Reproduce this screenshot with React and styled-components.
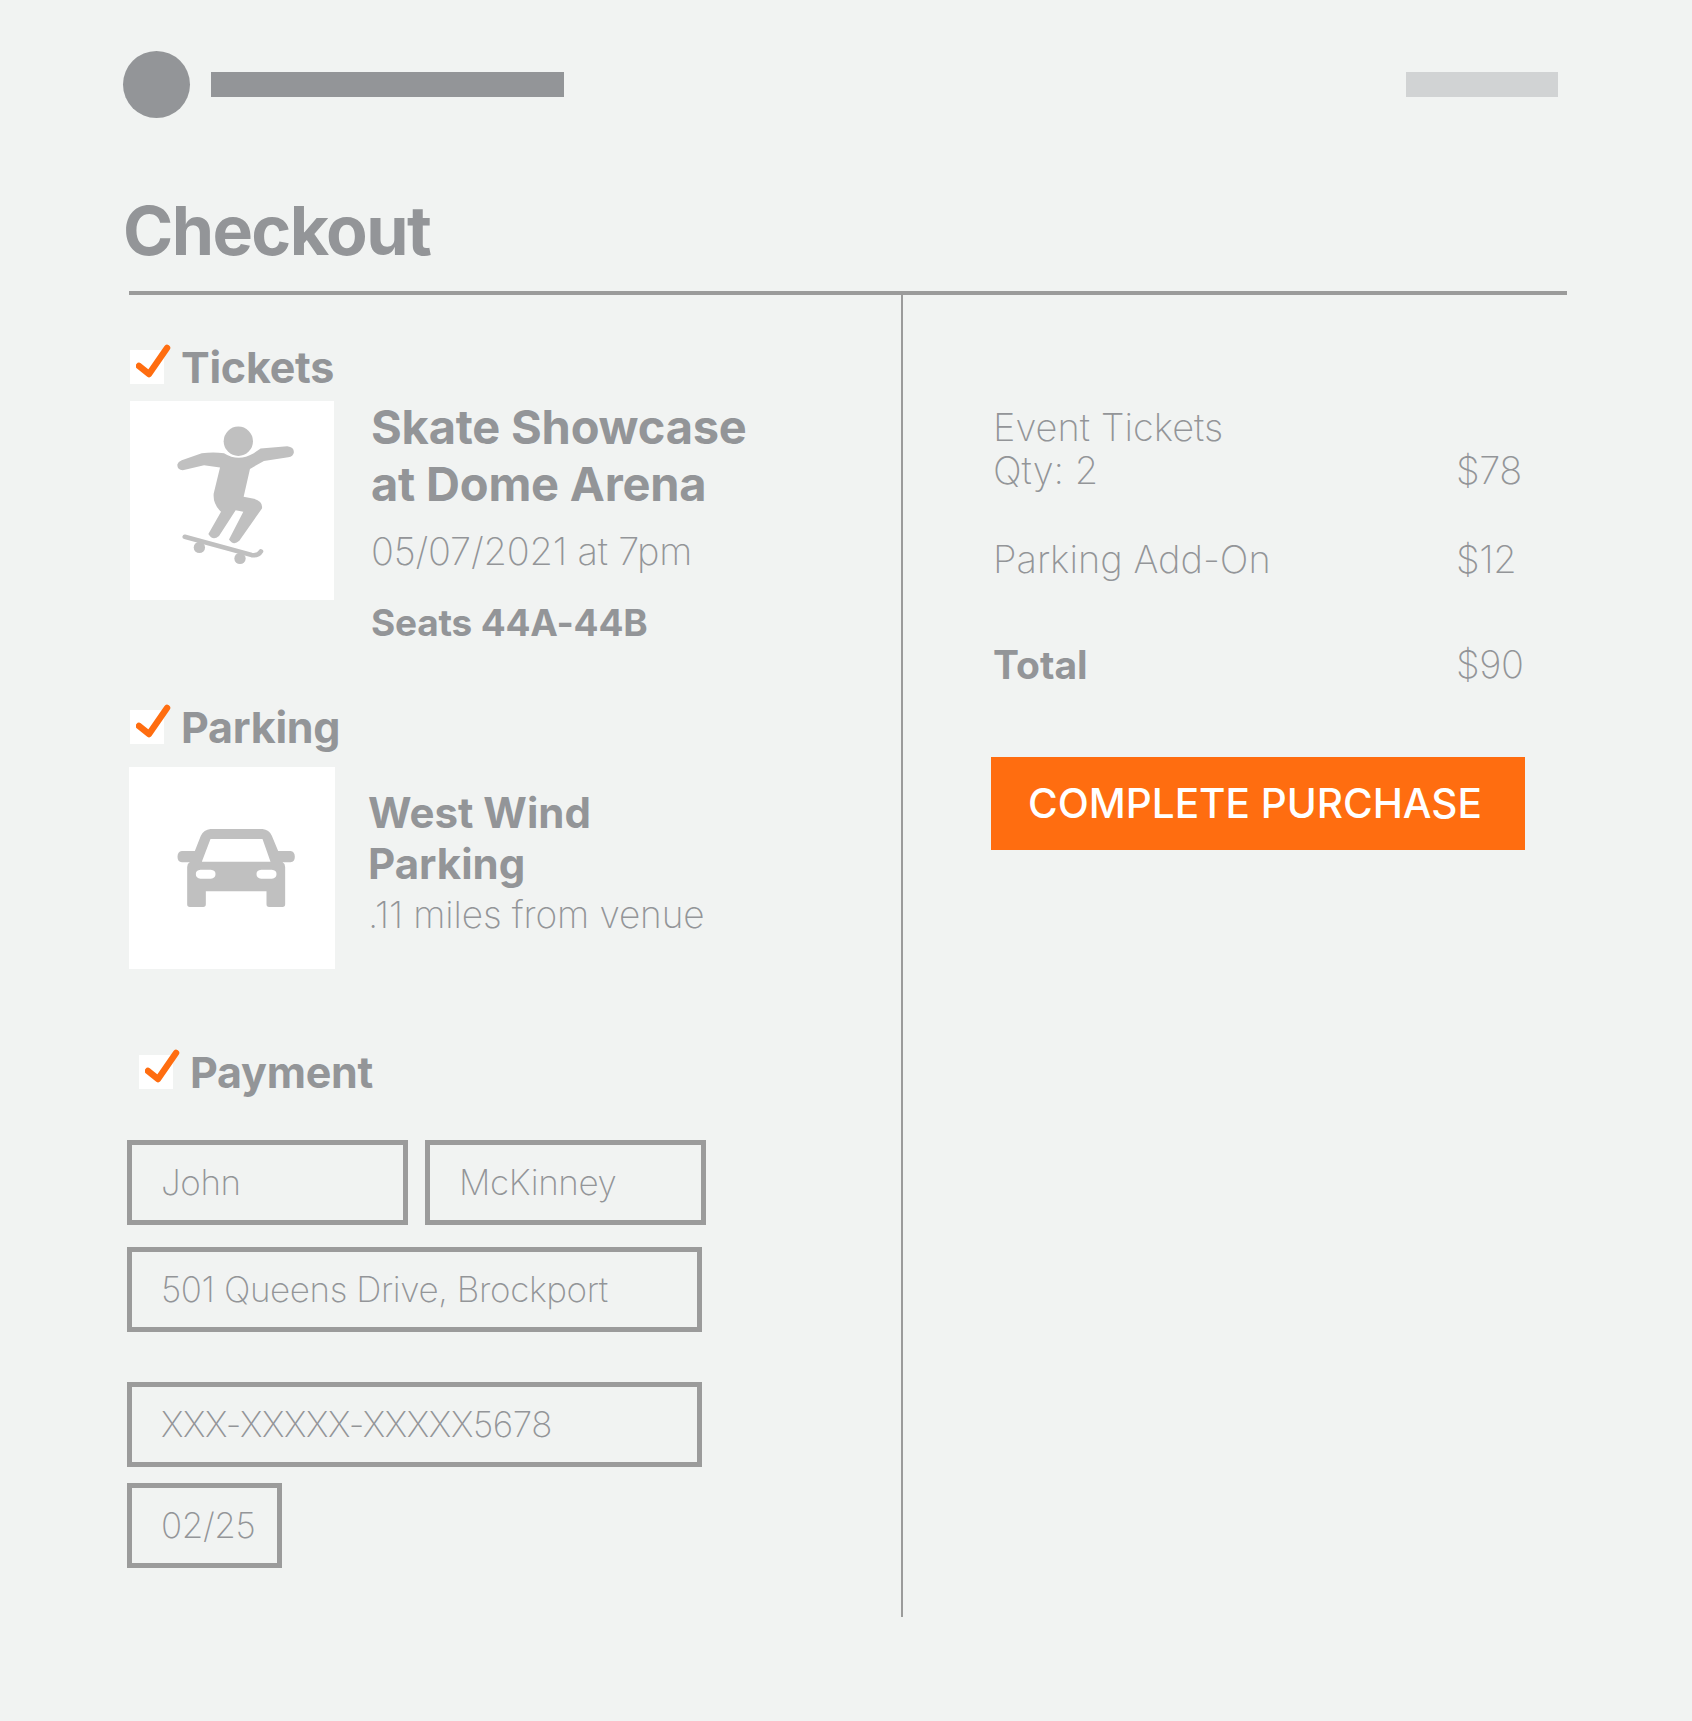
import React from "react";
import styled, { createGlobalStyle } from "styled-components";

const GlobalStyle = createGlobalStyle`
  html, body {
    margin: 0;
    padding: 0;
    background: #f1f3f2;
    font-family: Inter, "Liberation Sans", sans-serif;
    color: #939598;
  }
  * { box-sizing: border-box; }
`;

function Check() {
  return (
    <CheckBox>
      <svg viewBox="0 0 44 44" width="44" height="44">
        <path d="M3 22 L13 30 L31 4" fill="none" stroke="#ff6d10" strokeWidth="6.5" strokeLinecap="round" strokeLinejoin="round" />
      </svg>
    </CheckBox>
  );
}

function Skater() {
  return (
    <svg viewBox="90 212 612 598" width="204" height="199">
      <circle cx="415" cy="333" r="44" fill="#c0c0c0" />
      <path
        fill="#c0c0c0"
        d="M245 390 L305 369 Q340 364 372 369 Q415 396 460 370 L482 355 L562 348 Q582 350 582 366 Q580 380 565 381 L492 392 L450 416 L431 500 L462 506 Q490 515 486 535 L418 632 Q400 648 387 628 L430 545 L407 540 L357 618 Q338 634 325 612 L363 545 Q338 520 341 490 L360 412 L312 405 L248 420 Q230 418 232 402 Q234 394 245 390 Z"
      />
      <path d="M254 620 L455 675 Q475 678 483 664" fill="none" stroke="#c0c0c0" strokeWidth="14" strokeLinecap="round" />
      <circle cx="298" cy="652" r="17" fill="#c0c0c0" />
      <circle cx="420" cy="685" r="17" fill="#c0c0c0" />
    </svg>
  );
}

function Car() {
  return (
    <svg viewBox="88 232 617 606" width="206" height="202">
      <path
        fill="#c0c0c0"
        fillRule="evenodd"
        d="M332 418 L488 418 Q508 420 516 438 L535 484 L572 484 Q585 486 585 501 Q585 516 572 518 L548 518 Q556 522 556 532 L556 644 Q556 652 548 652 L508 652 Q500 652 500 644 L500 605 L318 605 L318 644 Q318 652 310 652 L270 652 Q262 652 262 644 L262 532 Q262 522 270 518 L246 518 Q233 516 233 501 Q233 486 246 484 L285 484 L303 438 Q312 420 332 418 Z M332 448 L306 516 L512 516 L488 448 Z M302 540 Q288 541 288 553 Q288 566 302 567 L333 567 Q347 566 347 553 Q347 541 333 540 Z M484 540 Q470 541 470 553 Q470 566 484 567 L516 567 Q530 566 530 553 Q530 541 516 540 Z"
      />
    </svg>
  );
}

export default function App() {
  return (
    <Page>
      <GlobalStyle />
      <TopBar>
        <Avatar />
        <BrandBar />
        <AccountBar />
      </TopBar>
      <PageTitle>Checkout</PageTitle>
      <Columns>
        <LeftColumn>
          <SectionHead>
            <Check />
            <SectionLabel>Tickets</SectionLabel>
          </SectionHead>
          <ItemRow>
            <Thumb $w={204} $h={199}>
              <Skater />
            </Thumb>
            <TicketInfo>
              <EventName>
                Skate Showcase
                <br />
                at Dome Arena
              </EventName>
              <ThinLine>05/07/2021 at 7pm</ThinLine>
              <Seats>Seats 44A-44B</Seats>
            </TicketInfo>
          </ItemRow>

          <SectionHead $top={59}>
            <Check />
            <SectionLabel>Parking</SectionLabel>
          </SectionHead>
          <ItemRow $top={18}>
            <Thumb $w={206} $h={202} $left={-1}>
              <Car />
            </Thumb>
            <ParkingInfo>
              <LotName>
                West Wind
                <br />
                Parking
              </LotName>
              <LotDistance>.11 miles from venue</LotDistance>
            </ParkingInfo>
          </ItemRow>

          <SectionHead $top={81} $left={9}>
            <Check />
            <SectionLabel>Payment</SectionLabel>
          </SectionHead>
          <Form>
            <FieldRow>
              <Field $w={281}>John</Field>
              <Field $w={281}>McKinney</Field>
            </FieldRow>
            <Field $w={575} $top={22}>501 Queens Drive, Brockport</Field>
            <Field $w={575} $top={50}>XXX-XXXXX-XXXXX5678</Field>
            <Field $w={155} $top={16}>02/25</Field>
          </Form>
        </LeftColumn>
        <RightColumn>
          <SummaryRow>
            <span>
              Event Tickets
              <br />
              Qty: 2
            </span>
            <Price>$78</Price>
          </SummaryRow>
          <SummaryRow $top={46}>
            <span>Parking Add-On</span>
            <Price>$12</Price>
          </SummaryRow>
          <SummaryRow $top={62}>
            <TotalLabel>Total</TotalLabel>
            <Price>$90</Price>
          </SummaryRow>
          <PurchaseButton>COMPLETE PURCHASE</PurchaseButton>
        </RightColumn>
      </Columns>
    </Page>
  );
}

const Page = styled.div`
  width: 1692px;
  height: 1721px;
  padding: 51px 125px 0 123px;
  background: #f1f3f2;
  overflow: hidden;
`;

const TopBar = styled.div`
  display: flex;
  align-items: center;
  height: 67px;
`;

const Avatar = styled.div`
  width: 67px;
  height: 67px;
  border-radius: 50%;
  background: #939598;
`;

const BrandBar = styled.div`
  width: 353px;
  height: 25px;
  margin-left: 21px;
  background: #939598;
`;

const AccountBar = styled.div`
  width: 152px;
  height: 25px;
  margin-left: auto;
  margin-right: 9px;
  background: #d1d3d4;
`;

const PageTitle = styled.h1`
  margin: 72px 0 0;
  height: 80px;
  font-size: 68px;
  line-height: 80px;
  font-weight: 700;
  letter-spacing: -1.6px;
  color: #939598;
`;

const Columns = styled.div`
  display: grid;
  grid-template-columns: 774px 1fr;
  height: 1326px;
  margin: 21px 0 0 6px;
  border-top: 4px solid #9b9b9b;
`;

const LeftColumn = styled.div`
  border-right: 2px solid #9b9b9b;
  padding: 50px 0 0 1px;
`;

const RightColumn = styled.div`
  padding: 111px 40px 0 90px;
`;

const SectionHead = styled.div`
  display: flex;
  align-items: center;
  gap: 17px;
  height: 44px;
  margin-top: ${(p) => p.$top || 0}px;
  margin-left: ${(p) => p.$left || 0}px;
`;

const CheckBox = styled.div`
  position: relative;
  width: 34px;
  height: 34px;
  background: #fff;
  svg {
    position: absolute;
    left: 6px;
    top: -6px;
  }
`;

const SectionLabel = styled.span`
  font-size: 43px;
  line-height: 44px;
  font-weight: 700;
  letter-spacing: -0.25px;
`;

const ItemRow = styled.div`
  display: flex;
  margin-top: ${(p) => p.$top ?? 12}px;
`;

const Thumb = styled.div`
  flex: none;
  width: ${(p) => p.$w}px;
  height: ${(p) => p.$h}px;
  margin-left: ${(p) => p.$left || 0}px;
  background: #fff;
  display: flex;
`;

const TicketInfo = styled.div`
  margin-left: 37px;
  margin-top: -3px;
`;

const EventName = styled.div`
  font-size: 47px;
  line-height: 57px;
  font-weight: 700;
  letter-spacing: -0.2px;
`;

const ThinLine = styled.div`
  margin-top: 14px;
  font-size: 38px;
  line-height: 50px;
  font-weight: 250;
  letter-spacing: -0.2px;
`;

const Seats = styled.div`
  margin-top: 24px;
  font-size: 37px;
  line-height: 46px;
  font-weight: 700;
  letter-spacing: -0.2px;
`;

const ParkingInfo = styled.div`
  margin-left: 33px;
  margin-top: 20px;
`;

const LotName = styled.div`
  font-size: 42px;
  line-height: 51px;
  font-weight: 700;
`;

const LotDistance = styled.div`
  margin-top: 2px;
  font-size: 37px;
  line-height: 48px;
  font-weight: 250;
  letter-spacing: -0.1px;
`;

const Form = styled.div`
  margin-top: 46px;
  margin-left: -3px;
`;

const FieldRow = styled.div`
  display: flex;
  gap: 17px;
`;

const Field = styled.div`
  width: ${(p) => p.$w}px;
  height: 85px;
  margin-top: ${(p) => p.$top || 0}px;
  padding: 0 0 2px 29px;
  border: 5px solid #9b9b9b;
  display: flex;
  align-items: center;
  font-size: 35px;
  font-weight: 250;
  letter-spacing: -0.4px;
`;

const SummaryRow = styled.div`
  display: flex;
  justify-content: space-between;
  align-items: flex-end;
  margin-top: ${(p) => p.$top || 0}px;
  font-size: 38px;
  line-height: 43px;
  font-weight: 250;
`;

const Price = styled.span`
  width: 71px;
  letter-spacing: -0.4px;
`;

const TotalLabel = styled.span`
  font-weight: 700;
  font-size: 39px;
`;

const PurchaseButton = styled.div`
  width: 534px;
  height: 93px;
  margin: 71px 0 0 -2px;
  padding-right: 6px;
  background: #ff6d10;
  color: #fff;
  display: flex;
  align-items: center;
  justify-content: center;
  font-size: 40.5px;
  font-weight: 500;
`;
